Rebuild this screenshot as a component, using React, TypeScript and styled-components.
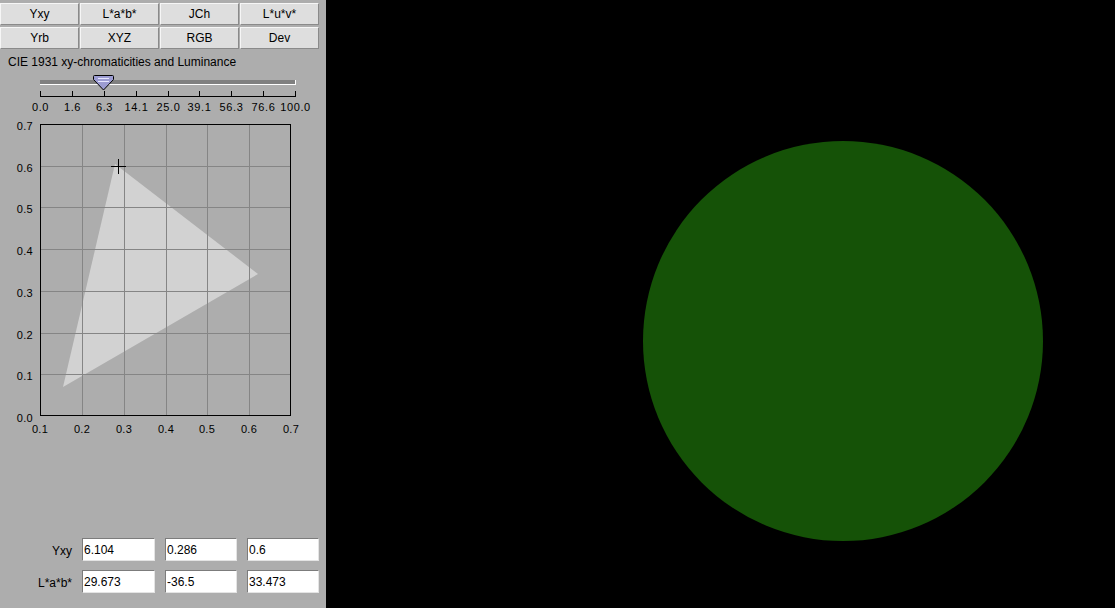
import React from "react";
import styled, { createGlobalStyle } from "styled-components";

const Global = createGlobalStyle`
  html, body { margin: 0; padding: 0; background: #000; }
  body { font-family: "Liberation Sans", Arial, sans-serif; }
  #root { width: 1115px; height: 608px; overflow: hidden; }
`;

const Page = styled.div`
  display: flex;
  width: 1115px;
  height: 608px;
  background: #000;
`;

const Panel = styled.div`
  width: 326px;
  height: 608px;
  flex: none;
  background: #adadad;
  display: flex;
  flex-direction: column;
  font-family: "Liberation Sans", Arial, sans-serif;
  color: #000;
`;

const ButtonGrid = styled.div`
  display: grid;
  grid-template-columns: repeat(4, 79px);
  grid-auto-rows: 22px;
  column-gap: 1px;
  row-gap: 2px;
  margin-top: 3px;
`;

const ModeButton = styled.button`
  margin: 0;
  padding: 0;
  box-sizing: border-box;
  background: #dedede;
  border-top: 1px solid #f6f6f6;
  border-left: 1px solid #f6f6f6;
  border-right: 1px solid #8a8a8a;
  border-bottom: 1px solid #8a8a8a;
  font-family: "Liberation Sans", Arial, sans-serif;
  font-size: 12px;
  color: #000;
  line-height: 20px;
  text-align: center;
`;

const Title = styled.div`
  margin-top: 6px;
  padding-left: 8px;
  font-size: 12px;
  line-height: 14px;
  white-space: nowrap;
`;

const SliderSvg = styled.svg`
  display: block;
  width: 326px;
  height: 45px;
  flex: none;
`;

const ChartSvg = styled.svg`
  display: block;
  width: 326px;
  height: 326px;
  flex: none;
`;

const Fields = styled.div`
  display: grid;
  grid-template-columns: 72px 73px 72px 72px;
  grid-auto-rows: 23px;
  column-gap: 10px;
  row-gap: 9px;
  margin-top: 98px;
  align-items: center;
`;

const FieldLabel = styled.div`
  text-align: right;
  font-size: 12px;
  line-height: 14px;
  padding-top: 2px;
`;

const FieldInput = styled.input`
  box-sizing: border-box;
  width: 100%;
  height: 23px;
  margin: 0;
  padding: 0 0 0 1px;
  background: #fff;
  border-top: 1px solid #7c7c7c;
  border-left: 1px solid #7c7c7c;
  border-right: 1px solid #e4e4e4;
  border-bottom: 1px solid #e4e4e4;
  font-family: "Liberation Sans", Arial, sans-serif;
  font-size: 12px;
  color: #000;
  outline: none;
`;

const Display = styled.div`
  flex: 1;
  background: #000;
`;

const Swatch = styled.div`
  width: 400px;
  height: 400px;
  margin: 141px 0 0 317px;
  border-radius: 50%;
  background: #155207;
`;

const buttons = ["Yxy", "L*a*b*", "JCh", "L*u*v*", "Yrb", "XYZ", "RGB", "Dev"];
const ticks = ["0.0", "1.6", "6.3", "14.1", "25.0", "39.1", "56.3", "76.6", "100.0"];

const Slider: React.FC = () => {
  const step = 255 / 8;
  return (
    <SliderSvg viewBox="0 0 326 45">
      <rect x={40} y={11} width={255} height={4} fill="#808080" />
      <line x1={40} y1={15.5} x2={296} y2={15.5} stroke="#fff" />
      <line x1={295.5} y1={11} x2={295.5} y2={16} stroke="#fff" />
      <line x1={40} y1={27.5} x2={296} y2={27.5} stroke="#000" />
      {ticks.map((t, i) => {
        const x = Math.round(40 + i * step) + 0.5;
        return (
          <g key={t}>
            <line x1={x} y1={22} x2={x} y2={28} stroke="#000" />
            <text
              x={x}
              y={42}
              textAnchor="middle"
              fontSize={11}
              letterSpacing={0.6}
              fontFamily="Liberation Sans, Arial, sans-serif"
              fill="#000"
            >
              {t}
            </text>
          </g>
        );
      })}
      <path
        d="M93.5,7.5 Q93.5,6.5 94.5,6.5 L112.5,6.5 Q113.5,6.5 113.5,7.5 L113.5,10.5 L103.5,21 L93.5,10.5 Z"
        fill="#9c9cd2"
        stroke="#000"
      />
      <line x1={98} y1={9.5} x2={109} y2={9.5} stroke="#e6e6ff" />
      <line x1={98} y1={12.5} x2={109} y2={12.5} stroke="#e6e6ff" />
    </SliderSvg>
  );
};

const Chart: React.FC = () => {
  const left = 40;
  const top = 10;
  const w = 251;
  const h = 292;
  const xs = [0.1, 0.2, 0.3, 0.4, 0.5, 0.6, 0.7];
  const ys = [0.0, 0.1, 0.2, 0.3, 0.4, 0.5, 0.6, 0.7];
  const gx = (i: number) => Math.round(left + (i * w) / 6);
  const gy = (i: number) => Math.round(top + h - (i * h) / 7);
  return (
    <ChartSvg viewBox="0 0 326 326">
      <polygon points="115,50 258,160 63,273" fill="#d2d2d2" />
      {xs.slice(1, 6).map((_, k) => {
        const x = gx(k + 1) + 0.5;
        return <line key={"vx" + k} x1={x} y1={top} x2={x} y2={top + h} stroke="#858585" />;
      })}
      {ys.slice(1, 7).map((_, k) => {
        const y = gy(k + 1) + 0.5;
        return <line key={"hy" + k} x1={left} y1={y} x2={left + w} y2={y} stroke="#858585" />;
      })}
      <rect x={left + 0.5} y={top + 0.5} width={w - 1} height={h - 1} fill="none" stroke="#000" />
      <line x1={111} y1={52.5} x2={126} y2={52.5} stroke="#000" />
      <line x1={118.5} y1={45} x2={118.5} y2={60} stroke="#000" />
      {ys.map((v, i) => (
        <text
          key={"yl" + i}
          x={33}
          y={gy(i) + 5.5}
          textAnchor="end"
          fontSize={11}
          letterSpacing={0.3}
          fontFamily="Liberation Sans, Arial, sans-serif"
          fill="#000"
        >
          {v.toFixed(1)}
        </text>
      ))}
      {xs.map((v, i) => (
        <text
          key={"xl" + i}
          x={gx(i)}
          y={319}
          textAnchor="middle"
          fontSize={11}
          letterSpacing={0.3}
          fontFamily="Liberation Sans, Arial, sans-serif"
          fill="#000"
        >
          {v.toFixed(1)}
        </text>
      ))}
    </ChartSvg>
  );
};

const rows: { label: string; values: string[] }[] = [
  { label: "Yxy", values: ["6.104", "0.286", "0.6"] },
  { label: "L*a*b*", values: ["29.673", "-36.5", "33.473"] },
];

export default function App() {
  return (
    <>
      <Global />
      <Page>
        <Panel>
          <ButtonGrid>
            {buttons.map((b) => (
              <ModeButton key={b}>{b}</ModeButton>
            ))}
          </ButtonGrid>
          <Title>CIE 1931 xy-chromaticities and Luminance</Title>
          <Slider />
          <Chart />
          <Fields>
            {rows.map((r) => (
              <React.Fragment key={r.label}>
                <FieldLabel>{r.label}</FieldLabel>
                {r.values.map((v, i) => (
                  <FieldInput key={i} defaultValue={v} readOnly />
                ))}
              </React.Fragment>
            ))}
          </Fields>
        </Panel>
        <Display>
          <Swatch />
        </Display>
      </Page>
    </>
  );
}
